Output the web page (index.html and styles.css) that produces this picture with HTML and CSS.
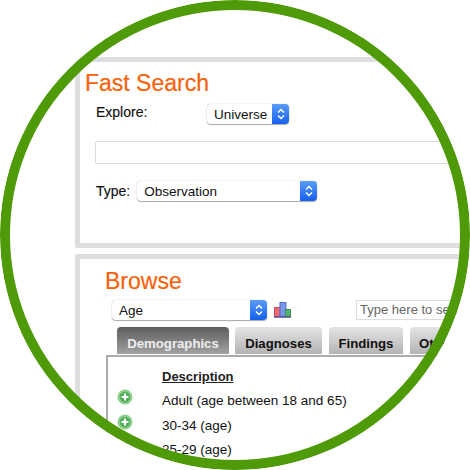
FILE: index.html
```html
<!DOCTYPE html>
<html lang="en">

<head>
    <meta charset="UTF-8">
    <title>Fast Search</title>
    <link rel="stylesheet" href="styles.css">
</head>

<body>
    <div class="circle">
        <div class="panel search-panel">
            <h2 class="search-title">Fast Search</h2>
            <div class="explore-row">
                <span class="label explore-label">Explore:</span>
                <div class="select universe-select">
                    <span class="select-text">Universe</span>
                    <span class="select-arrows"><svg width="10" height="14" viewBox="0 0 10 14"><path d="M2 5.5 5 2.5 8 5.5M2 8.5 5 11.5 8 8.5" fill="none" stroke="#fff" stroke-width="1.5"/></svg></span>
                </div>
            </div>
            <div class="query-box"></div>
            <div class="type-row">
                <span class="label">Type:</span>
                <div class="select type-select">
                    <span class="select-text">Observation</span>
                    <span class="select-arrows"><svg width="10" height="14" viewBox="0 0 10 14"><path d="M2 5.5 5 2.5 8 5.5M2 8.5 5 11.5 8 8.5" fill="none" stroke="#fff" stroke-width="1.5"/></svg></span>
                </div>
            </div>
        </div>

        <div class="panel browse-panel">
            <h2 class="browse-title">Browse</h2>
            <div class="browse-tools">
                <div class="select age-select">
                    <span class="select-text">Age</span>
                    <span class="select-arrows"><svg width="10" height="14" viewBox="0 0 10 14"><path d="M2 5.5 5 2.5 8 5.5M2 8.5 5 11.5 8 8.5" fill="none" stroke="#fff" stroke-width="1.5"/></svg></span>
                </div>
                <svg class="chart-icon" width="17" height="16" viewBox="0 0 17 16">
                    <rect x="0.5" y="5.5" width="6" height="9" fill="#ee6a70" stroke="#d04a60"/>
                    <rect x="6" y="0.5" width="6" height="14" fill="#7a98e8" stroke="#4a6cc8"/>
                    <rect x="11.5" y="7.5" width="5" height="7" fill="#58b070" stroke="#3c9058"/>
                    <path d="M0 15.2H17" stroke="#4a4a90" stroke-width="1.4"/>
                </svg>
                <div class="term-box">Type here to search</div>
            </div>
            <div class="tabs">
                <div class="tab tab-active demographics">Demographics</div>
                <div class="tab diagnoses">Diagnoses</div>
                <div class="tab findings">Findings</div>
                <div class="tab other">Other</div>
            </div>
            <div class="results">
                <div class="result-head">Description</div>
                <div class="result-row">
                    <svg class="add-icon" width="16" height="16" viewBox="0 0 16 16"><circle cx="8" cy="8" r="7.5" fill="#8ecf8e"/><circle cx="8" cy="8" r="5.2" fill="#4fae55"/><path d="M8 4.5V11.5M4.5 8H11.5" stroke="#fff" stroke-width="2.2"/></svg>
                    <span>Adult (age between 18 and 65)</span>
                </div>
                <div class="result-row">
                    <svg class="add-icon" width="16" height="16" viewBox="0 0 16 16"><circle cx="8" cy="8" r="7.5" fill="#8ecf8e"/><circle cx="8" cy="8" r="5.2" fill="#4fae55"/><path d="M8 4.5V11.5M4.5 8H11.5" stroke="#fff" stroke-width="2.2"/></svg>
                    <span>30-34 (age)</span>
                </div>
                <div class="result-row">
                    <span>25-29 (age)</span>
                </div>
            </div>
        </div>

        <div class="ring"></div>
    </div>
</body>

</html>
```

FILE: styles.css
```css
html, body {
    margin: 0;
    padding: 0;
    background-color: #fff;
}

body {
    width: 470px;
    height: 470px;
    overflow: hidden;
    font-family: "Liberation Sans", Arial, sans-serif;
    color: #111;
}

.circle {
    position: relative;
    width: 470px;
    height: 470px;
    border-radius: 50%;
    overflow: hidden;
    padding: 57px 0 0 75px;
    box-sizing: border-box;
}

.ring {
    position: absolute;
    inset: 0;
    border: 10px solid #4f9a09;
    border-radius: 50%;
    background: transparent;
}

.panel {
    width: 480px;
    box-sizing: border-box;
    border: 5px solid #dedede;
    border-right: none;
    border-radius: 3px 0 0 3px;
}

.search-panel {
    height: 191px;
    padding: 7px 0 0 6px;
}

.browse-panel {
    height: 230px;
    margin-top: 6px;
    padding: 8px 0 0 26px;
}

h2 {
    margin: 0 0 0 -1px;
    font-size: 23px;
    line-height: 28px;
    font-weight: normal;
    color: #f8620a;
    -webkit-text-stroke: 0.2px #f8620a;
}

.label {
    font-size: 14px;
    -webkit-text-stroke: 0.15px #111;
}

.explore-row {
    display: flex;
    align-items: flex-start;
    margin: 7px 0 0 10px;
}

.explore-label {
    width: 111px;
    line-height: 16px;
}

.select {
    display: flex;
    justify-content: space-between;
    align-items: center;
    height: 20px;
    box-sizing: border-box;
    background: #fff;
    border-radius: 4px;
    box-shadow: 0 0 1px #999, 0 1px 1px #aaa;
    font-size: 13.5px;
    overflow: hidden;
}

.select-text {
    padding-left: 7px;
}

.select-arrows {
    display: flex;
    align-items: center;
    justify-content: center;
    width: 17px;
    height: 20px;
    background: linear-gradient(#5a9cf8, #1560ee);
}

.universe-select {
    width: 82px;
}

.query-box {
    width: 400px;
    height: 23px;
    margin: 17px 0 0 9px;
    box-sizing: border-box;
    border: 1px solid #dcdcdc;
    border-radius: 2px;
}

.type-row {
    display: flex;
    align-items: center;
    gap: 7px;
    margin: 17px 0 0 10px;
}

.type-select {
    width: 180px;
}

.browse-tools {
    display: flex;
    align-items: center;
    margin: 5px 0 0 6px;
}

.age-select {
    width: 156px;
}

.chart-icon {
    margin-left: 7px;
}

.term-box {
    width: 200px;
    height: 20px;
    margin-left: 65px;
    padding-left: 3px;
    box-sizing: border-box;
    border: 1px solid #dcdcdc;
    font-size: 13px;
    line-height: 18px;
    color: #666;
    white-space: nowrap;
    overflow: hidden;
}

.tabs {
    display: flex;
    margin: 7px 0 0 11px;
}

.tab {
    height: 27px;
    box-sizing: border-box;
    text-align: center;
    font-size: 13.2px;
    line-height: 33px;
    font-weight: bold;
    background: linear-gradient(#e4e4e4, #b4b4b4);
    border-radius: 4px 4px 0 0;
    overflow: hidden;
    white-space: nowrap;
}

.tab-active {
    color: #eee;
    background: linear-gradient(#5c5c5c, #a2a2a2);
}

.demographics {
    width: 112px;
}

.diagnoses {
    width: 87px;
    margin-left: 6px;
}

.findings {
    width: 74px;
    margin-left: 7px;
}

.other {
    width: 60px;
    margin-left: 7px;
    text-align: left;
    padding-left: 9px;
}

.results {
    width: 400px;
    height: 120px;
    margin-top: 1px;
    box-sizing: border-box;
    border-top: 2px solid #ababab;
    border-left: 2px solid #ababab;
    padding: 12px 0 0 54px;
    font-size: 13.5px;
}

.result-head {
    font-size: 13px;
    font-weight: bold;
    line-height: 16px;
    text-decoration: underline;
    color: #222;
}

.result-row {
    position: relative;
    height: 24.5px;
    line-height: 16px;
}

.result-head + .result-row {
    margin-top: 8px;
}

.add-icon {
    position: absolute;
    left: -45px;
    top: -4px;
}
```
